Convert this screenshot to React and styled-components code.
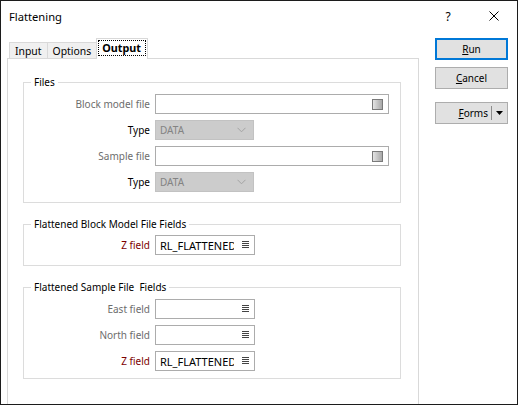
import React from "react";
import styled, { createGlobalStyle } from "styled-components";

const Global = createGlobalStyle`
  html, body { margin: 0; padding: 0; background: #fff; }
  body { font-family: "Noto Sans", "Segoe UI", sans-serif; font-size: 10px; color: #000; }
  * { box-sizing: border-box; }
`;

const Window = styled.div`
  width: 518px;
  height: 405px;
  border: 1px solid #1c1c1c;
  background: #fff;
  overflow: hidden;
  display: flex;
  flex-direction: column;
`;

const TitleBar = styled.div`
  height: 30px;
  flex: none;
  display: flex;
  align-items: center;
  padding-left: 8px;
`;

const Title = styled.div`
  flex: 1;
  font-size: 11.2px;
  color: #000;
`;

const CaptionButton = styled.div`
  width: 46px;
  height: 30px;
  display: flex;
  align-items: center;
  justify-content: center;
  font-size: 12px;
  color: #000;
`;

const Body = styled.div`
  flex: 1;
  display: flex;
  padding: 7px 0 0 6px;
  min-height: 0;
`;

const TabArea = styled.div`
  width: 412px;
  display: flex;
  flex-direction: column;
`;

const TabStrip = styled.div`
  height: 20px;
  display: flex;
  align-items: flex-start;
  padding-left: 2px;
  position: relative;
  z-index: 1;
`;

const Tab = styled.div`
  margin-top: ${(p) => (p.$active ? "0" : "4px")};
  height: ${(p) => (p.$active ? "21px" : "16px")};
  padding: ${(p) => (p.$active ? "1px 1px 0" : "0 5px 0 5px")};
  margin-left: ${(p) => (p.$active ? "-1px" : "0")};
  border: 1px solid #d9d9d9;
  border-bottom: none;
  border-left: ${(p) => (p.$first || p.$active ? "1px solid #d9d9d9" : "none")};
  background: ${(p) => (p.$active ? "#fff" : "#f0f0f0")};
  font-weight: ${(p) => (p.$active ? 700 : 400)};
  display: flex;
  align-items: ${(p) => (p.$active ? "flex-start" : "center")};
  line-height: 14px;
  font-size: 10.4px;
`;

const FocusLabel = styled.span`
  border: 1px dotted #000;
  padding: 0 4px 0 3px;
  line-height: 14px;
  font-size: 10.8px;
`;

const TabPanel = styled.div`
  flex: 1;
  border: 1px solid #d9d9d9;
  border-bottom: none;
  padding: 15px 17px 0 15px;
`;

const Group = styled.fieldset`
  margin: 0 0 ${(p) => p.$mb || 0}px 0;
  padding: 0 0 ${(p) => p.$pb}px 0;
  border: 1px solid #dcdcdc;
  min-width: 0;
`;

const Legend = styled.legend`
  margin-left: 7px;
  padding: 0 3px;
  line-height: 16px;
  color: #000;
`;

const Rows = styled.div`
  margin-top: ${(p) => p.$mt}px;
  display: grid;
  grid-template-columns: 126px auto;
  column-gap: 5px;
  row-gap: 6px;
  align-items: center;
`;

const Label = styled.div`
  text-align: right;
  white-space: nowrap;
  line-height: 20px;
  color: ${(p) =>
    p.$tone === "disabled" ? "#6d6d6d" : p.$tone === "required" ? "#7d0000" : "#000"};
`;

const Input = styled.div`
  width: ${(p) => p.$w}px;
  height: 20px;
  border: 1px solid #acacac;
  background: #fff;
  display: flex;
  align-items: center;
  padding: 0 5px 0 4px;
`;

const InputText = styled.div`
  flex: 1;
  overflow: hidden;
  white-space: nowrap;
  color: #000;
  margin-right: 8px;
  font-size: 11px;
`;

const BrowseBox = styled.div`
  width: 11px;
  height: 11px;
  border: 1px solid #7a7a7a;
  background: linear-gradient(90deg, #e4e4e4, #a8a8a8);
`;

const Select = styled.div`
  width: 99px;
  height: 20px;
  border: 1px solid #c2c2c2;
  background: #cccccc;
  display: flex;
  align-items: center;
  justify-content: space-between;
  padding: 0 7px 0 4px;
  color: #838383;
`;

const ButtonColumn = styled.div`
  margin-left: 16px;
  width: 73px;
  display: flex;
  flex-direction: column;
`;

const Button = styled.div`
  height: 22px;
  margin-bottom: ${(p) => p.$mb || 0}px;
  border: ${(p) => (p.$default ? "2px solid #0078d7" : "1px solid #adadad")};
  background: #e1e1e1;
  display: flex;
  align-items: center;
  justify-content: center;
  color: #000;
  u { text-decoration: underline; }
`;

const SplitButton = styled.div`
  height: 22px;
  border: 1px solid #adadad;
  background: #e1e1e1;
  display: flex;
  align-items: center;
`;

const SplitMain = styled.div`
  flex: 1;
  text-align: right;
  padding-right: 3px;
`;

const SplitDivider = styled.div`
  width: 1px;
  height: 14px;
  background: #8c8c8c;
`;

const SplitArrow = styled.div`
  width: 15px;
  display: flex;
  justify-content: center;
`;

const Chevron = () => (
  <svg width="9" height="6" viewBox="0 0 9 6">
    <path d="M0.5 0.8 L4.5 4.8 L8.5 0.8" fill="none" stroke="#a3a3a3" strokeWidth="1" />
  </svg>
);

const ListIcon = () => (
  <svg width="7" height="8" viewBox="0 0 7 8">
    <g fill="#444">
      <rect x="0" y="0" width="7" height="1" />
      <rect x="0" y="2" width="7" height="1" />
      <rect x="0" y="4" width="7" height="1" />
      <rect x="0" y="6" width="7" height="1" />
    </g>
  </svg>
);

const FileInput = () => (
  <Input $w={234}>
    <InputText />
    <BrowseBox />
  </Input>
);

const FieldInput = ({ value }) => (
  <Input $w={100}>
    <InputText>{value}</InputText>
    <ListIcon />
  </Input>
);

const TypeSelect = () => (
  <Select>
    <span>DATA</span>
    <Chevron />
  </Select>
);

export default function App() {
  return (
    <>
      <Global />
      <Window>
        <TitleBar>
          <Title>Flattening</Title>
          <CaptionButton>?</CaptionButton>
          <CaptionButton>
            <svg width="10" height="10" viewBox="0 0 10 10">
              <path d="M0.5 0.5 L9.5 9.5 M9.5 0.5 L0.5 9.5" stroke="#000" strokeWidth="1" />
            </svg>
          </CaptionButton>
        </TitleBar>
        <Body>
          <TabArea>
            <TabStrip>
              <Tab $first>Input</Tab>
              <Tab>Options</Tab>
              <Tab $active>
                <FocusLabel>Output</FocusLabel>
              </Tab>
            </TabStrip>
            <TabPanel>
              <Group $pb={10} $mb={13}>
                <Legend>Files</Legend>
                <Rows $mt={4}>
                  <Label $tone="disabled">Block model file</Label>
                  <FileInput />
                  <Label>Type</Label>
                  <TypeSelect />
                  <Label $tone="disabled">Sample file</Label>
                  <FileInput />
                  <Label>Type</Label>
                  <TypeSelect />
                </Rows>
              </Group>
              <Group $pb={10} $mb={13}>
                <Legend>Flattened Block Model File Fields</Legend>
                <Rows $mt={3}>
                  <Label $tone="required">Z field</Label>
                  <FieldInput value="RL_FLATTENED" />
                </Rows>
              </Group>
              <Group $pb={7}>
                <Legend>Flattened Sample File&nbsp; Fields</Legend>
                <Rows $mt={4}>
                  <Label $tone="disabled">East field</Label>
                  <FieldInput value="" />
                  <Label $tone="disabled">North field</Label>
                  <FieldInput value="" />
                  <Label $tone="required">Z field</Label>
                  <FieldInput value="RL_FLATTENED" />
                </Rows>
              </Group>
            </TabPanel>
          </TabArea>
          <ButtonColumn>
            <Button $default $mb={7}>
              <span><u>R</u>un</span>
            </Button>
            <Button $mb={13}>
              <span><u>C</u>ancel</span>
            </Button>
            <SplitButton>
              <SplitMain><u>F</u>orms</SplitMain>
              <SplitDivider />
              <SplitArrow>
                <svg width="7" height="4" viewBox="0 0 7 4">
                  <path d="M0 0 L7 0 L3.5 4 Z" fill="#000" />
                </svg>
              </SplitArrow>
            </SplitButton>
          </ButtonColumn>
        </Body>
      </Window>
    </>
  );
}
